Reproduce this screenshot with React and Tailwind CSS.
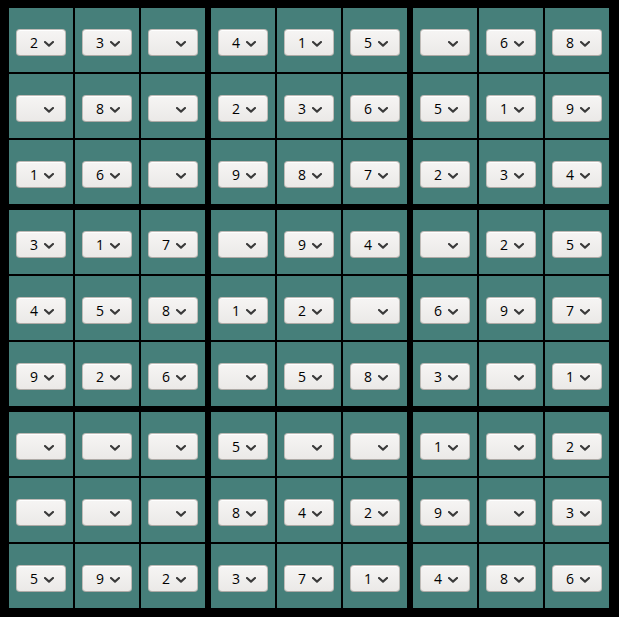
const rows = [
  [2, 3, 0, 4, 1, 5, 0, 6, 8],
  [0, 8, 0, 2, 3, 6, 5, 1, 9],
  [1, 6, 0, 9, 8, 7, 2, 3, 4],
  [3, 1, 7, 0, 9, 4, 0, 2, 5],
  [4, 5, 8, 1, 2, 0, 6, 9, 7],
  [9, 2, 6, 0, 5, 8, 3, 0, 1],
  [0, 0, 0, 5, 0, 0, 1, 0, 2],
  [0, 0, 0, 8, 4, 2, 9, 0, 3],
  [5, 9, 2, 3, 7, 1, 4, 8, 6],
];

// cells of box b, in reading order
function boxCells(b) {
  const br = Math.floor(b / 3) * 3;
  const bc = (b % 3) * 3;
  const out = [];
  for (let r = 0; r < 3; r++) {
    for (let c = 0; c < 3; c++) out.push(rows[br + r][bc + c]);
  }
  return out;
}

function Chevron() {
  return (
    <svg width="10" height="6" viewBox="0 0 10 6" className="absolute left-[27px] top-[11px]">
      <path d="M1 1 L5 4.6 L9 1" fill="none" stroke="#3a3a3a" strokeWidth="2.1" strokeLinecap="round" strokeLinejoin="round" />
    </svg>
  );
}

function Cell({ value }) {
  return (
    <div className="h-[64px] bg-[#467f7a] flex justify-center pt-[21px]">
      <div className="relative w-[50px] h-[27px] rounded-[4px] border border-[#bfbbb7] border-b-[#aeaaa6] bg-gradient-to-b from-[#f6f5f4] to-[#ebe9e7] shadow-[inset_0_1px_0_#ffffff]">
        <span className="absolute left-[13px] top-[3px] text-[14px] leading-[19px] text-black [font-family:'Open_Sans',sans-serif]">
          {value ? value : ''}
        </span>
        <Chevron />
      </div>
    </div>
  );
}

export default function App() {
  return (
    <div className="min-h-screen w-full bg-black pl-[9px] pt-[8px]">
      <div className="grid grid-cols-[repeat(3,196px)] gap-[6px]">
        {[0, 1, 2, 3, 4, 5, 6, 7, 8].map((b) => (
          <div key={b} className="grid grid-cols-[repeat(3,64px)] gap-[2px]">
            {boxCells(b).map((v, i) => (
              <Cell key={i} value={v} />
            ))}
          </div>
        ))}
      </div>
    </div>
  );
}
